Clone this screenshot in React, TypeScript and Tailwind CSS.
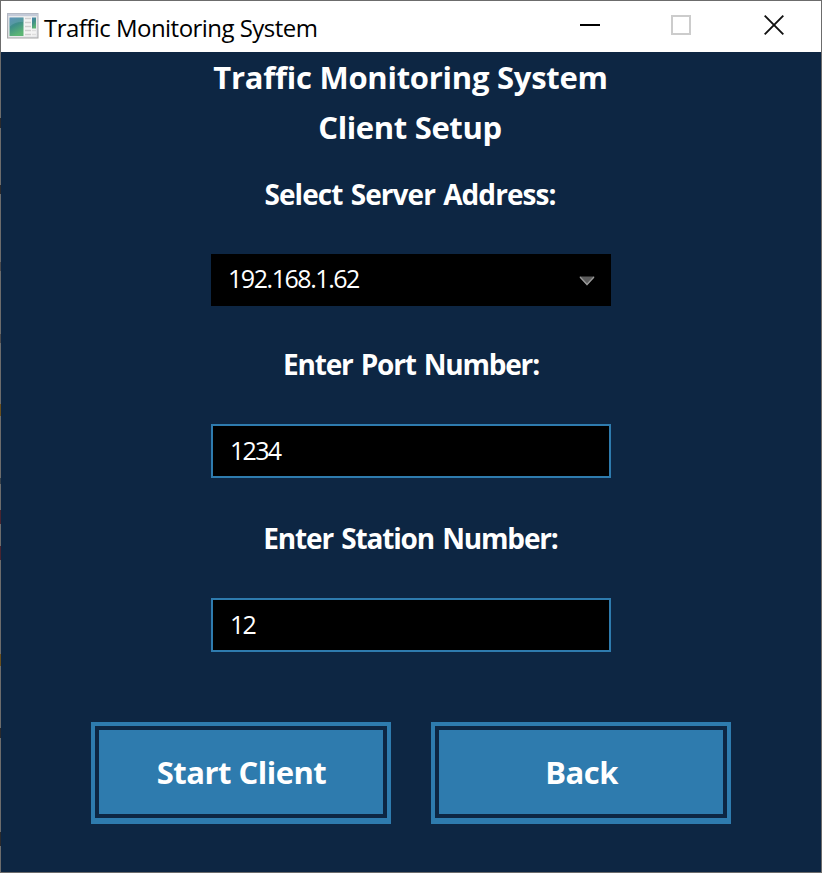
import type { ReactNode } from "react";

const edgeMarks = [
  { top: 118, height: 10, color: "#2b2a2c" },
  { top: 185, height: 9, color: "#2b2a2c" },
  { top: 262, height: 9, color: "#4b4a4c" },
  { top: 334, height: 9, color: "#4b4a4c" },
  { top: 404, height: 12, color: "#6a4f1c" },
  { top: 478, height: 6, color: "#35404a" },
  { top: 510, height: 14, color: "#4a2530" },
  { top: 546, height: 14, color: "#4a2530" },
  { top: 654, height: 12, color: "#6a4f1c" },
  { top: 728, height: 10, color: "#2b2a2c" },
  { top: 832, height: 14, color: "#2b2a2c" },
];

function AppIcon() {
  return (
    <svg width="32" height="26" viewBox="0 0 32 26" className="block">
      <defs>
        <linearGradient id="pane" x1="0" y1="0" x2="0.4" y2="1">
          <stop offset="0" stopColor="#4c83b0" />
          <stop offset="0.5" stopColor="#3f8f88" />
          <stop offset="1" stopColor="#5cb574" />
        </linearGradient>
        <linearGradient id="frame" x1="0" y1="0" x2="0" y2="1">
          <stop offset="0" stopColor="#b4b9c4" />
          <stop offset="1" stopColor="#a8a8a8" />
        </linearGradient>
      </defs>
      <rect x="0.5" y="0.5" width="30.5" height="24.5" fill="#dcdee2" stroke="url(#frame)" />
      <rect x="1" y="1" width="29.5" height="2" fill="#c3cad8" />
      <rect x="2" y="3.500" width="27.5" height="20" fill="#f4f4f4" />
      <rect x="2.5" y="4.5" width="14" height="18.5" fill="url(#pane)" />
      <path d="M2.5 14C6 10 11 8.500 16.500 9V4.500H2.500Z" fill="#8cb8cf" opacity="0.3" />
      <path d="M18 5.500h6M18 9.500h6M18 13.500h6M18 17.500h6M18 21.500h6" stroke="#cfcfcf" strokeWidth="1.3" />
      <rect x="25" y="4.500" width="4" height="11" fill="url(#pane)" />
      <path d="M25 17.500h4M25 21.500h4" stroke="#dedede" strokeWidth="1.3" />
    </svg>
  );
}

function TitleBar() {
  return (
    <header className="flex h-[51px] items-center bg-white">
      <div className="ml-1.5 -mt-px">
        <AppIcon />
      </div>
      <h1 className="ml-[5px] w-[300px] pt-0.5 text-[24px] leading-[49px] tracking-[-0.54px] text-black">
        Traffic Monitoring System
      </h1>
      <div className="ml-auto flex items-center pr-[37px] pb-[3px]">
        <svg width="20" height="20" className="mr-[71px]">
          <path d="M0 10h20" stroke="#000" strokeWidth="2" />
        </svg>
        <svg width="20" height="20" className="mr-[73px]">
          <rect x="1" y="1" width="18" height="18" fill="none" stroke="#ccc" strokeWidth="2" />
        </svg>
        <svg width="20" height="20">
          <path d="M0.700 0.700L19.300 19.300M19.300 0.700L0.700 19.300" stroke="#111" strokeWidth="1.900" />
        </svg>
      </div>
    </header>
  );
}

function Field({ children }: { children: ReactNode }) {
  return (
    <div className="flex h-[54px] w-[400px] items-center border-2 border-[#2e7bae] bg-black pl-[17px] text-[25px] tracking-[-1.7px]">
      {children}
    </div>
  );
}

function SetupButton({ children }: { children: ReactNode }) {
  return (
    <button className="h-[102px] w-[300px] border-4 border-b-[6px] border-[#2e7bae] p-1">
      <span className="flex h-full items-center justify-center bg-[#2e7bae] pl-px text-[31px] leading-none font-bold tracking-[-0.5px]">
        {children}
      </span>
    </button>
  );
}

export default function App() {
  return (
    <div className="relative h-[873px] w-[822px] border border-[#6c6c6c] bg-[#0d2643] font-['Open_Sans','Noto_Sans',sans-serif] text-white">
      <TitleBar />
      <main className="flex flex-col items-center">
        <h2 className="mr-px h-[50px] pt-px text-[31px] leading-[49px] font-bold whitespace-nowrap tracking-[-0.26px]">
          Traffic Monitoring System
        </h2>
        <h2 className="mr-0.5 h-[50px] pt-px text-[31px] leading-[49px] font-bold tracking-[-0.35px]">Client Setup</h2>
        <label className="mr-0.5 mt-[22px] h-10 text-[28px] leading-10 font-bold tracking-[-0.95px] [word-spacing:2px]">
          Select Server Address:
        </label>
        <div className="mt-10 flex h-[52px] w-[400px] items-center justify-between bg-black pr-4 pl-[17px] text-[25px] leading-[50px] tracking-[-1.45px]">
          <span className="-mt-1">192.168.1.62</span>
          <svg width="16" height="10" className="mt-px">
            <path d="M0.500 0.500H15.500L8 9.500Z" fill="#5c5c5c" />
            <path d="M1 1L8 8.500L15 1" fill="none" stroke="#9a9a9a" strokeWidth="1.300" />
          </svg>
        </div>
        <label className="mt-[38px] h-10 text-[28px] leading-10 font-bold tracking-[-1.2px] [word-spacing:2px]">
          Enter Port Number:
        </label>
        <div className="mt-10">
          <Field>1234</Field>
        </div>
        <label className="mr-px mt-10 h-10 text-[28px] leading-10 font-bold tracking-[-1.15px] [word-spacing:2px]">
          Enter Station Number:
        </label>
        <div className="mt-10">
          <Field>12</Field>
        </div>
        <div className="mt-[70px] flex gap-10">
          <SetupButton>Start Client</SetupButton>
          <SetupButton>Back</SetupButton>
        </div>
      </main>
      {edgeMarks.map((m) => (
        <i
          key={m.top}
          className="absolute -left-px w-px"
          style={{ top: m.top - 1, height: m.height, backgroundColor: m.color }}
        />
      ))}
    </div>
  );
}
